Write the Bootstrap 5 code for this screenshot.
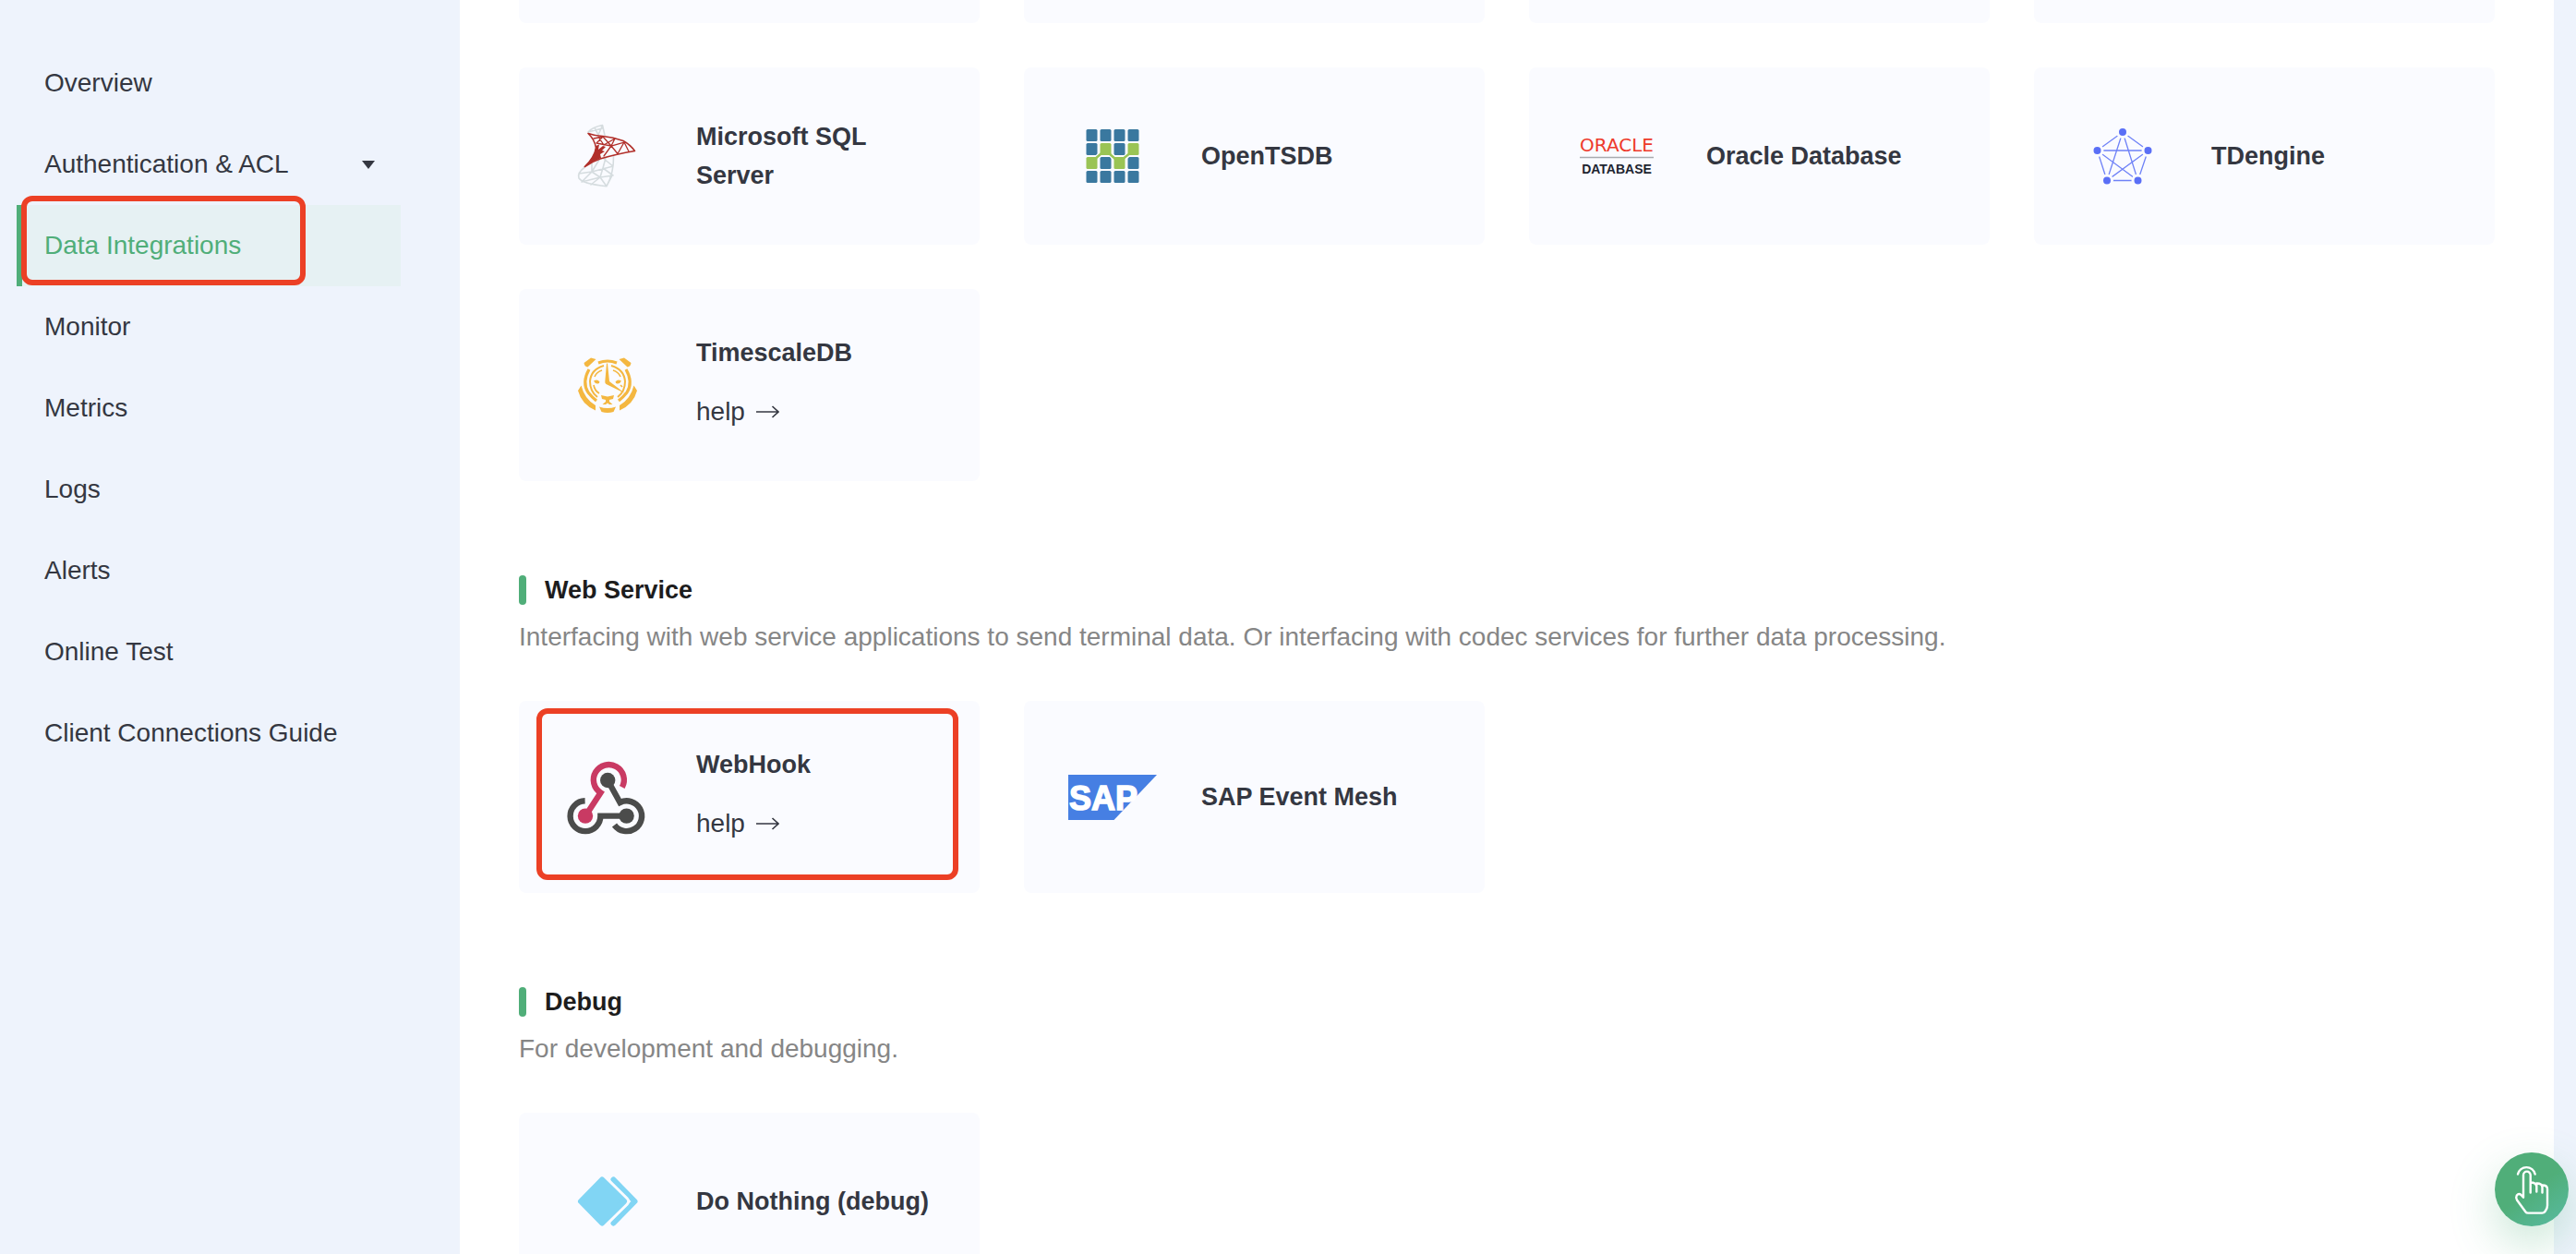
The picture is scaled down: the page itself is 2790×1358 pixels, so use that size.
<!DOCTYPE html>
<html lang="en">
<head>
<meta charset="utf-8">
<meta name="viewport" content="width=device-width, initial-scale=1">
<title>Data Integrations</title>
<link href="https://cdn.jsdelivr.net/npm/bootstrap@5.3.0/dist/css/bootstrap.min.css" rel="stylesheet">
<style>
  :root { --ink: #343741; --green: #50ae79; --pale: #eef3fc; --alert: #ec4025; }
  body { background: var(--pale); color: var(--ink); font-family: "Liberation Sans", Arial, sans-serif; font-size: 28px; line-height: 42px; }

  /* Sidebar */
  .side { width: 498px; padding: 46px 64px 0 18px; }
  .side .nav-link { height: 88px; padding: 0 28px 0 24px; border-left: 6px solid transparent; color: var(--ink); }
  .side .nav-link.active { background: #e6f1f3; border-left-color: var(--green); color: var(--green); }
  .caret-down { border: 7px solid transparent; border-top: 9px solid var(--ink); border-bottom: 0; }
  .marker { position: absolute; border: 6px solid var(--alert); border-radius: 12px; pointer-events: none; }
  .marker-nav { inset: -10px 103px 1px 5px; }
  .marker-card { inset: 8px 23px 14px 19px; }

  /* Content */
  .content { margin-right: 24px; padding: 0 64px; }
  .tiles { --bs-gutter-x: 48px; --bs-gutter-y: 48px; }
  .tiles-tail { --bs-gutter-y: 0px; }
  .tile { height: 100%; border: 0; border-radius: 8px; background: #fafbff; color: var(--ink); padding: 48px 40px 48px 48px; gap: 48px; }
  .tile-tail { height: 25px; border-radius: 0 0 8px 8px; background: #fafbff; }
  .tile svg.logo { width: 96px; height: 96px; flex: none; }
  .tile-title { margin: 0; font-size: 27px; line-height: 42px; font-weight: 700; }
  .help { margin-top: 16px; line-height: 54px; gap: 12px; color: var(--ink); }
  .group { margin-top: 96px; }
  .group-title { margin: 0 0 8px; gap: 20px; font-size: 27px; line-height: 44px; font-weight: 700; color: #1d1d1d; }
  .group-title::before { content: ""; width: 8px; height: 32px; border-radius: 4px; background: var(--green); }
  .group-text { margin: 0 0 48px; color: #868686; }

  .fab { right: 8px; bottom: 30px; width: 80px; height: 80px; border: 0; border-radius: 50%; background: linear-gradient(145deg, #50ae79 50%, #58bba2 100%); box-shadow: 0 20px 50px rgba(80, 174, 121, .3); }
</style>
<script src="https://cdn.jsdelivr.net/npm/bootstrap@5.3.0/dist/js/bootstrap.bundle.min.js"></script>
</head>
<body>
<div class="d-flex vh-100 overflow-hidden">

  <aside class="side flex-shrink-0">
    <nav class="nav flex-column flex-nowrap">
      <a class="nav-link d-flex align-items-center" href="#">Overview</a>
      <a class="nav-link d-flex align-items-center justify-content-between" href="#">Authentication &amp; ACL <span class="caret-down"></span></a>
      <div class="position-relative">
        <a class="nav-link active d-flex align-items-center" href="#" aria-current="page">Data Integrations</a>
        <div class="marker marker-nav"></div>
      </div>
      <a class="nav-link d-flex align-items-center" href="#">Monitor</a>
      <a class="nav-link d-flex align-items-center" href="#">Metrics</a>
      <a class="nav-link d-flex align-items-center" href="#">Logs</a>
      <a class="nav-link d-flex align-items-center" href="#">Alerts</a>
      <a class="nav-link d-flex align-items-center" href="#">Online Test</a>
      <a class="nav-link d-flex align-items-center" href="#">Client Connections Guide</a>
    </nav>
  </aside>

  <main class="content flex-grow-1 bg-white">
    <div class="row row-cols-4 tiles tiles-tail">
      <div class="col"><div class="tile-tail"></div></div>
      <div class="col"><div class="tile-tail"></div></div>
      <div class="col"><div class="tile-tail"></div></div>
      <div class="col"><div class="tile-tail"></div></div>
    </div>
    <div class="pt-5">
    <div class="row row-cols-4 tiles">
      <div class="col">
        <div class="card tile flex-row align-items-center">
          <svg class="logo" viewBox="0 0 96 96" fill="none" stroke-linejoin="round" stroke-linecap="round">
            <g stroke="#d5dcdf" stroke-width="1.600">
              <path d="M27 22Q31 17 42.500 14.500L45 25.500M27 22L42 18M34 17.500L38 25L42.500 15"/>
              <path d="M23.500 60Q15 66 17 72Q21 78 47 80.700Q55 66 54.500 48M39 52L31 65L54 59L44 51M31 65L17 67M31 65L20 76L40 71L54 69L43 61L46 50M31 65L40 71L43 61M40 71L47 80.700L53 69M40 71L30 79M31 65V56"/>
            </g>
            <path fill="#b12f2a" d="M35.300 37L39 35.500L38 41L43 37L46 38L42 42L45 43L40 46L41 50L32 54L23.300 59.500Q35 48 35.300 37Z"/>
            <g stroke="#b12f2a" stroke-width="1.600">
              <path d="M27 23.500Q34 26 43 26.500Q54 27.500 65 31.500Q73 36 77.500 42.500Q57 46 40 51Q31 54 23.300 59.500Q34 49 35.500 39Q34 30 27 23.500Z"/>
              <path stroke-width="1.300" d="M33 29L43 27L36 34L52 37L43 27M38 27L44 36L56 29L52 37L66 33L59 45.500L52 37L44 48M66 33L71 43"/>
            </g>
          </svg>
          <h3 class="tile-title">Microsoft SQL Server</h3>
        </div>
      </div>
      <div class="col">
        <div class="card tile flex-row align-items-center">
          <svg class="logo" viewBox="0 0 96 96">
            <g fill="#3a789f">
              <rect x="19.500" y="19" width="12" height="13" rx="1.500"/><rect x="34.500" y="19" width="12" height="13" rx="1.500"/><rect x="49.500" y="19" width="12" height="13" rx="1.500"/><rect x="64.500" y="19" width="12" height="13" rx="1.500"/>
              <rect x="19.500" y="34" width="12" height="13" rx="1.500"/><rect x="49.500" y="34" width="12" height="13" rx="1.500"/>
              <rect x="34.500" y="49" width="12" height="13" rx="1.500"/><rect x="64.500" y="49" width="12" height="13" rx="1.500"/>
              <rect x="19.500" y="64" width="12" height="13" rx="1.500"/><rect x="34.500" y="64" width="12" height="13" rx="1.500"/><rect x="49.500" y="64" width="12" height="13" rx="1.500"/><rect x="64.500" y="64" width="12" height="13" rx="1.500"/>
            </g>
            <path d="M27 53L37 44H44L52 53H58L69 43" fill="none" stroke="#fafbff" stroke-width="5"/>
            <g fill="#9ac455">
              <rect x="34.500" y="34" width="12" height="13" rx="1.500"/><rect x="64.500" y="34" width="12" height="13" rx="1.500"/><rect x="19.500" y="49" width="12" height="13" rx="1.500"/><rect x="49.500" y="49" width="12" height="13" rx="1.500"/>
            </g>
            <path d="M28 52L36 45H44L52 52H58L68 44" fill="none" stroke="#9ac455" stroke-width="2.500"/>
          </svg>
          <h3 class="tile-title">OpenTSDB</h3>
        </div>
      </div>
      <div class="col">
        <div class="card tile flex-row align-items-center">
          <svg class="logo" viewBox="0 0 96 96">
            <text x="47" y="43" text-anchor="middle" font-family="DejaVu Sans" font-size="20" fill="#ee3a2b">ORACLE</text>
            <path d="M7 49.500H87" stroke="#a9abb0" stroke-width="1.600"/>
            <text x="47" y="67" text-anchor="middle" font-family="Liberation Sans" font-weight="700" font-size="14" fill="#1d2430">DATABASE</text>
          </svg>
          <h3 class="tile-title">Oracle Database</h3>
        </div>
      </div>
      <div class="col">
        <div class="card tile flex-row align-items-center">
          <svg class="logo" viewBox="0 0 96 96">
            <path d="M48 22L20.500 42L31 74.500H64.500L75.500 42ZM48 22L31 74.500L75.500 42H20.500L64.500 74.500Z" fill="none" stroke="#6f82f7" stroke-width="1.300"/>
            <g fill="#5a6ff6" stroke="#fafbff" stroke-width="3">
              <circle cx="48" cy="22" r="5.500"/><circle cx="20.500" cy="42" r="5.500"/><circle cx="75.500" cy="42" r="5.500"/><circle cx="31" cy="74.500" r="5.500"/><circle cx="64.500" cy="74.500" r="5.500"/>
            </g>
          </svg>
          <h3 class="tile-title">TDengine</h3>
        </div>
      </div>
      <div class="col">
        <div class="card tile flex-row align-items-center">
          <svg class="logo" viewBox="0 0 96 96" fill="none" stroke="#f4b740">
            <g fill="#f4b740" stroke="none">
              <path d="M22.500 24L30 18.500L35.500 20L26.500 28.500Q23 28 22.500 24ZM73.500 24L66 18.500L60.500 20L69.500 28.500Q73 28 73.500 24Z"/>
              <path d="M19.500 48.500L16 54Q20 69 35 75.500V70Q23 63 19.500 48.500ZM76.500 48.500L80 54Q76 69 61 75.500V70Q73 63 76.500 48.500Z"/>
              <path d="M47 24.500H48L50 44L67 57L46.500 47Q45 46 45.300 44Z"/>
              <path d="M33 43.500Q37 41 39.500 44.500Q39 47 37 46.500Q34 46 33 43.500ZM63 43.500Q59 41 56.500 44.500Q57 47 59 46.500Q62 46 63 43.500Z"/>
              <path d="M41 59L48 60.500L55 59L54 63L50 64V66L53.500 69H50L48 67.500L46 69H42.500L46 66V64L42 63Z"/>
              <path d="M39 71.500Q48 74.500 57 71.500L54.500 77Q48 79 41.500 77Z"/>
            </g>
            <path stroke-width="3" d="M38 24Q48 20 58 24"/>
            <path stroke-width="3.200" d="M28 31Q20 45 27 56Q31 61 36 65M68 31Q76 45 69 56Q65 61 60 65"/>
            <path stroke-width="2" d="M44 27Q30 31 29 44Q29 55 37 61M52 27Q66 31 67 44Q67 55 59 61"/>
            <path stroke-width="1.700" d="M42 32Q36 34 34 39M54 32Q60 34 62 39M33 48Q34 54 39 57M62 48L64 50"/>
          </svg>
          <div>
            <h3 class="tile-title">TimescaleDB</h3>
            <a class="help d-inline-flex align-items-center text-decoration-none" href="#">help
              <svg width="25" height="14" viewBox="0 0 25 14" fill="none" stroke="currentColor" stroke-width="1.600"><path d="M0 7H24M17.500 1L24 7L17.500 13"/></svg></a>
          </div>
        </div>
      </div>
    </div>
    </div>

    <section class="group">
      <h2 class="group-title d-flex align-items-center">Web Service</h2>
      <p class="group-text">Interfacing with web service applications to send terminal data. Or interfacing with codec services for further data processing.</p>
      <div class="row row-cols-4 tiles">
        <div class="col">
          <div class="card tile flex-row align-items-center">
            <svg class="logo" viewBox="0 0 96 96" fill="none" stroke-width="6.400">
              <path stroke="#4b4c4b" d="M23.600 52.300A16.400 16.400 0 1 0 40.400 68.600H68.600"/>
              <path stroke="#4b4c4b" d="M48.200 30L61.500 54A16.400 16.400 0 1 1 55.500 78.500"/>
              <path stroke="#c93a63" d="M63.800 37.500A16.500 16.500 0 1 0 40.500 43.500L24 68.700"/>
              <g stroke="none"><circle cx="48.200" cy="30" r="8.200" fill="#4b4c4b"/><circle cx="68.600" cy="68.600" r="8.200" fill="#4b4c4b"/><circle cx="24" cy="68.600" r="8.200" fill="#c93a63"/></g>
            </svg>
            <div>
              <h3 class="tile-title">WebHook</h3>
              <a class="help d-inline-flex align-items-center text-decoration-none" href="#">help
                <svg width="25" height="14" viewBox="0 0 25 14" fill="none" stroke="currentColor" stroke-width="1.600"><path d="M0 7H24M17.500 1L24 7L17.500 13"/></svg></a>
            </div>
            <div class="marker marker-card"></div>
          </div>
        </div>
        <div class="col">
          <div class="card tile flex-row align-items-center">
            <svg class="logo" viewBox="0 0 96 96">
              <path fill="#467fe3" d="M0 24H96L49.500 73H0Z"/>
              <text x="1" y="62" font-family="Liberation Sans" font-weight="700" font-size="36" fill="#fff" stroke="#fff" stroke-width="1.500">SAP</text>
            </svg>
            <h3 class="tile-title">SAP Event Mesh</h3>
          </div>
        </div>
      </div>
    </section>

    <section class="group">
      <h2 class="group-title d-flex align-items-center">Debug</h2>
      <p class="group-text">For development and debugging.</p>
      <div class="row row-cols-4 tiles">
        <div class="col">
          <div class="card tile flex-row align-items-center">
            <svg class="logo" viewBox="0 0 96 96" fill="none" stroke="#81d5f4" stroke-width="6" stroke-linejoin="round" stroke-linecap="round">
              <path d="M54.500 24.500L77.500 48L54.500 71.500"/>
              <path fill="#fafbff" stroke="#fafbff" stroke-width="12" d="M42 24.500L66 48L42 71.500L19 48Z"/>
              <path fill="#81d5f4" d="M42 24.500L66 48L42 71.500L19 48Z"/>
            </svg>
            <h3 class="tile-title">Do Nothing (debug)</h3>
          </div>
        </div>
      </div>
    </section>
  </main>
</div>

<button class="fab position-fixed p-0" type="button" aria-label="Guide">
  <svg class="d-block" width="80" height="80" viewBox="0 0 80 80" fill="none" stroke="#fff" stroke-width="2.400" stroke-linecap="round" stroke-linejoin="round">
    <path d="M25 23.500A9.600 9.600 0 0 1 43.700 23.500"/>
    <path d="M38.700 43.500V24.500A3.800 3.800 0 0 0 31 24.500V48.700L28.500 46Q26 44 23.800 46.500Q22.500 49 24 51.500L33.500 64.500Q34.300 65.600 36 65.600H51.500Q53.500 65.600 54.800 63.500Q57 60.500 57 57.500V39.500Q57 35.500 51.500 35.500V43.500V38Q51.500 33.500 45.300 33.500V42.500V37Q45 32.500 38.700 32.500"/>
  </svg>
</button>
</body>
</html>
